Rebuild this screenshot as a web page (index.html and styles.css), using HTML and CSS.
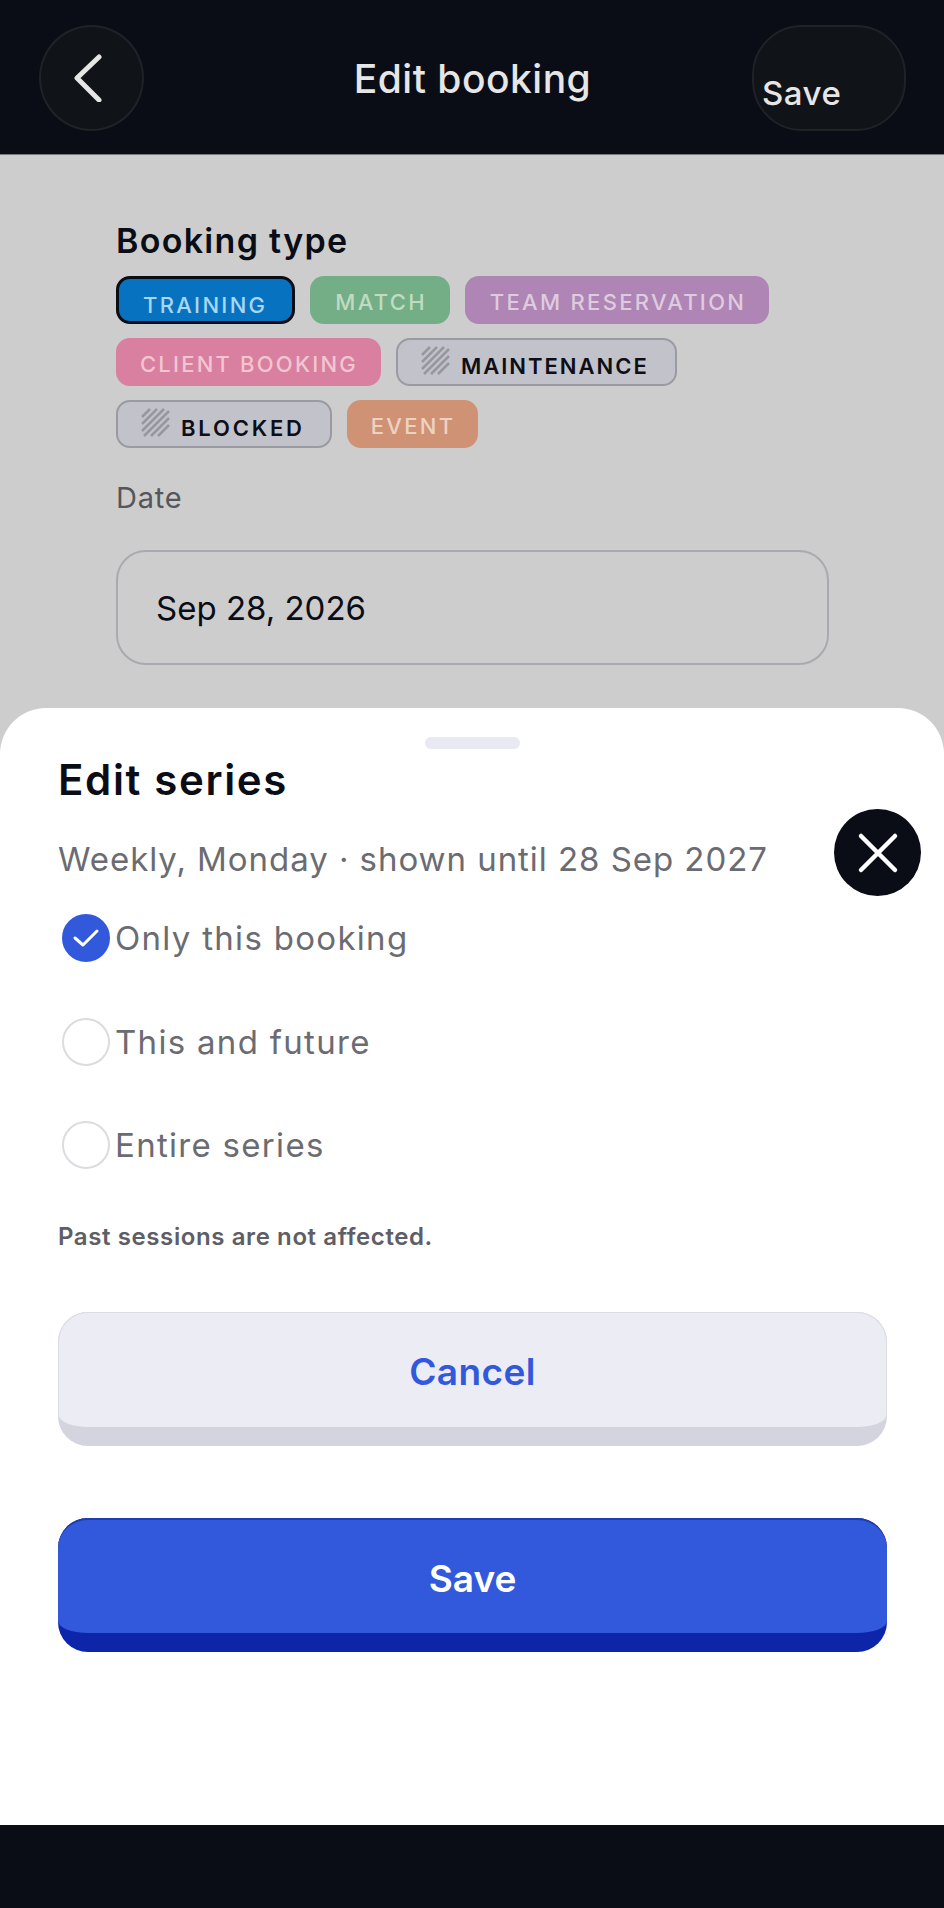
FILE: index.html
```html
<!DOCTYPE html>
<html lang="en">
<head>
    <meta charset="UTF-8">
    <meta name="viewport" content="width=device-width, initial-scale=1.0">
    <title>Edit booking</title>
    <link rel="stylesheet" href="styles.css">
</head>
<body>
    <header class="topbar">
        <button class="back-btn" aria-label="Back">
            <svg width="32" height="48" viewBox="0 0 32 48"><path d="M27 3 L5 24 L27 46" fill="none" stroke="#e6e6e6" stroke-width="5" stroke-linecap="round" stroke-linejoin="round"/></svg>
        </button>
        <h1 class="topbar-title">Edit booking</h1>
        <button class="save-top">Save</button>
    </header>

    <main class="form-area">
        <h2 class="field-title">Booking type</h2>
        <div class="chips">
            <span class="chip chip-training">TRAINING</span>
            <span class="chip chip-match">MATCH</span>
            <span class="chip chip-team">TEAM RESERVATION</span>
            <span class="chip chip-client">CLIENT BOOKING</span>
            <span class="chip chip-muted chip-maintenance">
                <svg class="hatch" viewBox="0 0 30 30"><path d="M1 9 L9 1 M1 16 L16 1 M1 23 L23 1 M3 28 L28 3 M10 28 L28 10 M17 28 L28 17" stroke="#96979f" stroke-width="2.5" fill="none"/></svg>
                MAINTENANCE
            </span>
            <span class="chip chip-muted chip-blocked">
                <svg class="hatch" viewBox="0 0 30 30"><path d="M1 9 L9 1 M1 16 L16 1 M1 23 L23 1 M3 28 L28 3 M10 28 L28 10 M17 28 L28 17" stroke="#96979f" stroke-width="2.5" fill="none"/></svg>
                BLOCKED
            </span>
            <span class="chip chip-event">EVENT</span>
        </div>
        <label class="date-label">Date</label>
        <div class="date-input">Sep 28, 2026</div>
    </main>

    <section class="sheet">
        <div class="sheet-handle"></div>
        <h2 class="sheet-title">Edit series</h2>
        <p class="sheet-sub">Weekly, Monday · shown until 28 Sep 2027</p>
        <button class="close-btn" aria-label="Close">
            <svg width="42" height="42" viewBox="0 0 42 42"><path d="M4 4 L38 38 M38 4 L4 38" stroke="#fff" stroke-width="4.5" stroke-linecap="round"/></svg>
        </button>

        <div class="options">
            <div class="option">
                <span class="radio radio-on">
                    <svg width="28" height="22" viewBox="0 0 28 22"><path d="M3 11 L11 18 L25 4" fill="none" stroke="#fff" stroke-width="3" stroke-linecap="round" stroke-linejoin="round"/></svg>
                </span>
                Only this booking
            </div>
            <div class="option"><span class="radio"></span>This and future</div>
            <div class="option"><span class="radio"></span>Entire series</div>
        </div>

        <p class="sheet-note">Past sessions are not affected.</p>

        <button class="big-btn big-btn-light"><span class="big-btn-face">Cancel</span></button>
        <button class="big-btn big-btn-primary"><span class="big-btn-face">Save</span></button>
    </section>

    <div class="bottom-bar"></div>
</body>
</html>
```

FILE: styles.css
```css
/* Page */
body {
    margin: 0;
    width: 944px;
    height: 1908px;
    display: flex;
    flex-direction: column;
    overflow: hidden;
    background-color: #cdcdcd;
    font-family: Inter, sans-serif;
    color: #0a0d16;
}

button {
    font-family: inherit;
    cursor: pointer;
}

/* Top bar */
.topbar {
    height: 155px;
    flex: none;
    box-sizing: border-box;
    padding: 25px 38px 23px 39px;
    background-color: #0a0d16;
    display: grid;
    grid-template-columns: 1fr auto 1fr;
    align-items: stretch;
    border-bottom: 1px solid #77787c;
}

.back-btn {
    width: 105px;
    padding: 0 8px 0 0;
    background-color: #101317;
    border: 2px solid #1f2226;
    border-radius: 50%;
    display: flex;
    align-items: center;
    justify-content: center;
}

.topbar-title {
    margin: 0;
    align-self: center;
    font-size: 39px;
    font-weight: 500;
    letter-spacing: 0.5px;
    color: #e6e6e6;
}

.save-top {
    width: 154px;
    justify-self: end;
    padding: 30px 0 0 8px;
    background-color: #101317;
    border: 2px solid #1f2226;
    border-radius: 50px;
    color: #e6e6e6;
    font-size: 33px;
    font-weight: 500;
    letter-spacing: 0.5px;
    text-align: left;
}

/* Form behind the sheet */
.form-area {
    height: 553px;
    flex: none;
    box-sizing: border-box;
    padding: 66px 115px 0 116px;
}

.field-title {
    margin: 0 0 15px;
    font-size: 34px;
    line-height: 40px;
    font-weight: 600;
    letter-spacing: 1.3px;
}

.chips {
    display: flex;
    flex-wrap: wrap;
    gap: 14px 15px;
}

.chip {
    height: 48px;
    box-sizing: border-box;
    padding: 4px 23px 0 24px;
    border-radius: 14px;
    display: inline-flex;
    align-items: center;
    font-size: 22px;
    font-weight: 500;
    letter-spacing: 2.3px;
    white-space: nowrap;
}

.chip-training {
    padding: 10px 25px 0 24px;
    background-color: #0773c0;
    border: 3px solid #0a0d16;
    color: #a9d6f2;
}

.chip-match {
    padding-left: 25px;
    background-color: #74ae87;
    color: #bfdcc2;
}

.chip-team {
    padding-left: 25px;
    background-color: #ae85b4;
    color: #dfcbdf;
}

.chip-client {
    letter-spacing: 2.2px;
    background-color: #d97f9f;
    color: #f1c6d2;
}

.chip-event {
    background-color: #cf9274;
    color: #edd2c2;
}

.chip-muted {
    padding: 8px 26px 0 23px;
    background-color: #c2c3ca;
    border: 2px solid #9a9ba2;
    color: #0d0e16;
    gap: 10px;
    font-weight: 600;
    letter-spacing: 2px;
}

.chip-blocked {
    padding-right: 25px;
    letter-spacing: 2.8px;
}

.hatch {
    width: 30px;
    height: 30px;
    margin-top: -10px;
}

.date-label {
    display: block;
    margin-top: 33px;
    font-size: 29px;
    line-height: 34px;
    letter-spacing: 0.8px;
    color: #55565c;
}

.date-input {
    margin-top: 35px;
    height: 115px;
    box-sizing: border-box;
    padding-left: 38px;
    border: 2px solid #a9aaaf;
    border-radius: 30px;
    display: flex;
    align-items: center;
    font-size: 33px;
    color: #0a0d16;
}

/* Bottom sheet */
.sheet {
    height: 1117px;
    flex: none;
    box-sizing: border-box;
    padding: 29px 57px 0 58px;
    position: relative;
    background-color: #fff;
    border-radius: 46px 46px 0 0;
}

.sheet-handle {
    width: 95px;
    height: 12px;
    margin: 0 auto;
    border-radius: 6px;
    background-color: #e9e9f2;
}

.sheet-title {
    margin: 5.5px 0 0;
    font-size: 42px;
    line-height: 50px;
    font-weight: 600;
    letter-spacing: 1.65px;
}

.sheet-sub {
    margin: 32px 0 0;
    font-size: 33px;
    line-height: 44px;
    letter-spacing: 0.95px;
    color: #6b6b72;
}

.close-btn {
    position: absolute;
    top: 101px;
    right: 23px;
    width: 87px;
    height: 87px;
    padding: 0;
    background-color: #0a0d16;
    border: none;
    border-radius: 50%;
    display: flex;
    align-items: center;
    justify-content: center;
}

.options {
    margin-top: 33.5px;
    display: flex;
    flex-direction: column;
    gap: 55.5px;
}

.option {
    height: 48px;
    padding-left: 4px;
    display: flex;
    align-items: center;
    gap: 5px;
    font-size: 33px;
    letter-spacing: 1.3px;
    color: #6b6b72;
}

.radio {
    width: 48px;
    height: 48px;
    flex: none;
    box-sizing: border-box;
    border: 2px solid #dcdce0;
    border-radius: 50%;
    display: flex;
    align-items: center;
    justify-content: center;
}

.radio-on {
    background-color: #3259db;
    border-color: #3259db;
}

.sheet-note {
    margin: 53px 0 0;
    font-size: 24px;
    line-height: 30px;
    font-weight: 600;
    letter-spacing: 0.6px;
    color: #5d5e66;
}

/* Big buttons with a raised edge */
.big-btn {
    display: flex;
    flex-direction: column;
    justify-content: flex-start;
    width: 100%;
    height: 134px;
    padding: 0;
    border: none;
    border-radius: 30px;
    font-size: 37px;
    font-weight: 600;
}

.big-btn-face {
    width: 100%;
    height: 115px;
    flex: none;
    box-sizing: border-box;
    padding-top: 3px;
    border-radius: 30px 30px 30px 30px / 30px 30px 12px 12px;
    display: flex;
    align-items: center;
    justify-content: center;
}

.big-btn-light {
    margin-top: 60px;
    background-color: #d4d4de;
    color: #3259db;
    letter-spacing: 0.4px;
}

.big-btn-light .big-btn-face {
    background-color: #ecedf4;
    border: 1px solid #dcdce4;
    border-bottom: none;
}

.big-btn-primary {
    margin-top: 72px;
    background-color: #0d25a8;
    color: #fff;
}

.big-btn-primary .big-btn-face {
    background-color: #3259db;
    border-top: 2px solid #1f3db0;
}

/* Home bar strip */
.bottom-bar {
    flex: 1;
    background-color: #0a0d16;
}
```
